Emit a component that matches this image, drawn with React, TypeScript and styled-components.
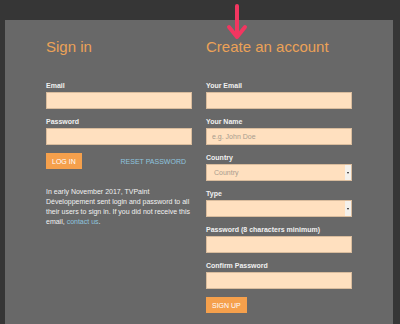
import React from 'react';
import styled, { createGlobalStyle } from 'styled-components';

const GlobalStyle = createGlobalStyle`
  html, body {
    margin: 0;
    padding: 0;
    background: #353535;
    font-family: "Liberation Sans", Arial, sans-serif;
    overflow: hidden;
  }
`;

const Page = styled.div`
  position: relative;
  width: 400px;
  height: 324px;
  padding-top: 20px;
  box-sizing: border-box;
  background: #363636;
`;

const Panel = styled.div`
  margin-left: 5px;
  width: 388px;
  height: 304px;
  box-sizing: border-box;
  padding: 18px 0 0 41px;
  background: #686868;
  display: grid;
  grid-template-columns: 146px 146px;
  column-gap: 14px;
  align-items: start;
`;

const Column = styled.div`
  display: flex;
  flex-direction: column;
`;

const Heading = styled.h2`
  margin: 0 0 25px;
  font-size: 15px;
  line-height: 18px;
  font-weight: normal;
  color: #eca257;
`;

const Field = styled.div`
  display: flex;
  flex-direction: column;
  gap: 2px;
  margin-bottom: 8px;
`;

const Label = styled.label`
  font-size: 7px;
  line-height: 9px;
  font-weight: bold;
  color: #f0f0f0;
`;

const Input = styled.div<{ $select?: boolean }>`
  height: 17px;
  box-sizing: border-box;
  background: #ffe0bf;
  border: 1px solid #d9bc9d;
  display: flex;
  align-items: center;
  font-size: 7px;
  color: #a89c8e;
  padding-left: ${(p) => (p.$select ? '7px' : '5px')};
  padding-right: 0;
`;

const Placeholder = styled.span`
  flex: 1;
`;

const SelectArrow = styled.span`
  width: 6px;
  height: 100%;
  background: #f4f1ec;
  display: flex;
  align-items: center;
  justify-content: center;
  &::after {
    content: '';
    border-left: 1.5px solid transparent;
    border-right: 1.5px solid transparent;
    border-top: 2px solid #222;
  }
`;

const Actions = styled.div`
  display: flex;
  justify-content: space-between;
  align-items: center;
  padding-right: 6px;
`;

const Button = styled.button`
  height: 16px;
  padding: 0 6px;
  border: none;
  background: #f5a04c;
  color: #fff;
  font-family: "Liberation Sans", Arial, sans-serif;
  font-size: 7px;
  text-transform: uppercase;
  align-self: flex-start;
`;

const LinkText = styled.a`
  color: #8ec4df;
  font-size: 7px;
  text-decoration: none;
`;

const Note = styled.p`
  margin: 18px 0 0;
  font-size: 7px;
  line-height: 10px;
  color: #f2f2f2;
`;

const Arrow = styled.svg`
  position: absolute;
  left: 226px;
  top: 4px;
`;

export default function App() {
  return (
    <Page>
      <GlobalStyle />
      <Arrow width="22" height="36" viewBox="0 0 22 36">
        <path
          d="M11 2 L11 33 M3 23 L11 33 L19 23"
          fill="none"
          stroke="#f23660"
          strokeWidth="4"
          strokeLinecap="round"
          strokeLinejoin="round"
        />
      </Arrow>
      <Panel>
        <Column>
          <Heading>Sign in</Heading>
          <Field>
            <Label>Email</Label>
            <Input />
          </Field>
          <Field>
            <Label>Password</Label>
            <Input />
          </Field>
          <Actions>
            <Button>Log in</Button>
            <LinkText href="#">RESET PASSWORD</LinkText>
          </Actions>
          <Note>
            In early November 2017, TVPaint
            <br />
            Développement sent login and password to all
            <br />
            their users to sign in. If you did not receive this
            <br />
            email, <LinkText href="#">contact us</LinkText>.
          </Note>
        </Column>
        <Column>
          <Heading>Create an account</Heading>
          <Field>
            <Label>Your Email</Label>
            <Input />
          </Field>
          <Field>
            <Label>Your Name</Label>
            <Input>
              <Placeholder>e.g. John Doe</Placeholder>
            </Input>
          </Field>
          <Field>
            <Label>Country</Label>
            <Input $select>
              <Placeholder>Country</Placeholder>
              <SelectArrow />
            </Input>
          </Field>
          <Field>
            <Label>Type</Label>
            <Input $select>
              <Placeholder />
              <SelectArrow />
            </Input>
          </Field>
          <Field>
            <Label>Password (8 characters minimum)</Label>
            <Input />
          </Field>
          <Field>
            <Label>Confirm Password</Label>
            <Input />
          </Field>
          <Button>Sign up</Button>
        </Column>
      </Panel>
    </Page>
  );
}
